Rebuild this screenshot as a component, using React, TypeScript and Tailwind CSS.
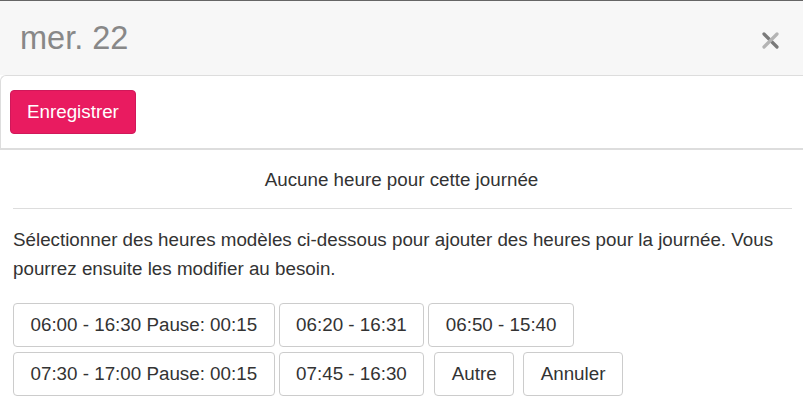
import type { ReactNode } from 'react';

const presetsRowOne = ['06:00 - 16:30 Pause: 00:15', '06:20 - 16:31', '06:50 - 15:40'];
const presetsRowTwo = ['07:30 - 17:00 Pause: 00:15', '07:45 - 16:30'];

function HourButton({ children, className = '' }: { children: ReactNode; className?: string }) {
  return (
    <button
      type="button"
      className={`h-[44px] rounded border border-[#cccccc] bg-white px-[16.5px] text-[18.8px] leading-[22px] text-[#333333] ${className}`}
    >
      {children}
    </button>
  );
}

export default function App() {
  return (
    <div
      className="h-[406px] w-[803px] overflow-hidden bg-white text-[#333333]"
      style={{ fontFamily: '"Liberation Sans", Arial, sans-serif' }}
    >
      {/* header */}
      <div className="flex h-[75px] items-center justify-between border-t border-[#666666] bg-[#f7f7f7] pl-[20px] pr-[24px]">
        <h1 className="text-[32.5px] leading-none text-[#888888]">mer. 22</h1>
        <button type="button" className="mt-[5px]" aria-label="Fermer">
          <svg width="17" height="17" viewBox="0 0 17 17">
            <path d="M2 2 L15 15" stroke="#7a7a7a" strokeWidth="3.2" strokeLinecap="round" />
            <path d="M15 2 L2 15" stroke="#b4b4b4" strokeWidth="3.2" strokeLinecap="round" />
          </svg>
        </button>
      </div>

      {/* actions */}
      <div className="flex h-[75px] items-center rounded-tl-[6px] border-t border-l border-b-2 border-[#dddddd] pl-[9px]">
        <button
          type="button"
          className="h-[44px] rounded border border-[#d0185a] bg-[#e91b60] px-[16px] text-[18.8px] text-white"
        >
          Enregistrer
        </button>
      </div>

      <div className="px-[13px]">
        <p className="pt-[19px] pb-[17px] text-center text-[18.8px] leading-[22px]">
          Aucune heure pour cette journée
        </p>
        <hr className="mr-[-2px] border-t border-[#dddddd]" />
        <p className="pt-[16px] text-[18.8px] leading-[29px]">
          Sélectionner des heures modèles ci-dessous pour ajouter des heures pour la journée. Vous
          pourrez ensuite les modifier au besoin.
        </p>

        <div className="mt-[20px] flex flex-col gap-[5px]">
          <div className="flex gap-[4px]">
            {presetsRowOne.map((label) => (
              <HourButton key={label}>{label}</HourButton>
            ))}
          </div>
          <div className="flex gap-[4px]">
            {presetsRowTwo.map((label) => (
              <HourButton key={label}>{label}</HourButton>
            ))}
            <HourButton className="ml-[6px]">Autre</HourButton>
            <HourButton className="ml-[5px]">Annuler</HourButton>
          </div>
        </div>
      </div>
    </div>
  );
}
